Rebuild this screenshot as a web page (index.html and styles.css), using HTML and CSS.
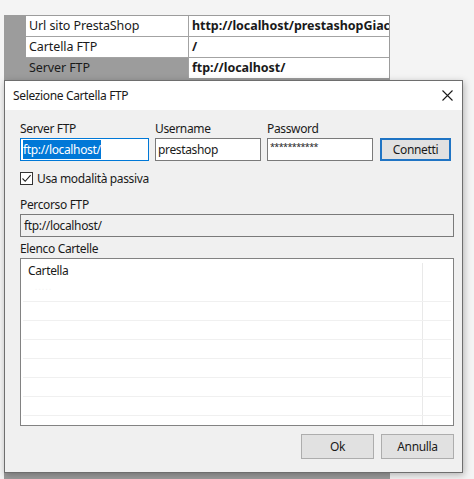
FILE: index.html
```html
<!DOCTYPE html>
<html lang="it">
<head>
<meta charset="utf-8">
<title>Selezione Cartella FTP</title>
<link rel="stylesheet" href="styles.css">
</head>
<body>
<div class="app">
  <div class="grid-panel">
    <div class="props">
      <div class="cell label">Url sito PrestaShop</div>
      <div class="cell value">http://localhost/prestashopGiac</div>
      <div class="cell label">Cartella FTP</div>
      <div class="cell value">/</div>
      <div class="cell label selected">Server FTP</div>
      <div class="cell value">ftp://localhost/</div>
    </div>
  </div>
</div>

<div class="dialog">
  <div class="titlebar">
    <span class="title">Selezione Cartella FTP</span>
    <svg class="close" width="11" height="11" viewBox="0 0 11 11"><path d="M0.5 0.5 L10.5 10.5 M10.5 0.5 L0.5 10.5" stroke="#1a1a1a" stroke-width="1.1" fill="none"/></svg>
  </div>
  <div class="body">
    <div class="fields">
      <div class="lbl">Server FTP</div>
      <div class="lbl">Username</div>
      <div class="lbl">Password</div>
      <div></div>
      <div class="input focused"><span class="sel">ftp://localhost/</span></div>
      <div class="input">prestashop</div>
      <div class="input pwd">***********</div>
      <div class="btn default">Connetti</div>
    </div>
    <div class="check-row">
      <span class="checkbox"><svg width="11" height="11" viewBox="0 0 11 11"><path d="M1.5 5.5 L4.2 8.3 L9.6 2.2" stroke="#1f1f1f" stroke-width="1.1" fill="none"/></svg></span>
      <span>Usa modalità passiva</span>
    </div>
    <div class="lbl sec1">Percorso FTP</div>
    <div class="input readonly">ftp://localhost/</div>
    <div class="lbl sec2">Elenco Cartelle</div>
    <div class="list">
      <div class="list-head">Cartella</div>
      <div class="list-row"><span class="ghost">. . . . .</span></div>
      <div class="list-row"></div>
      <div class="list-row"></div>
      <div class="list-row"></div>
      <div class="list-row"></div>
      <div class="list-row"></div>
      <div class="list-row"></div>
    </div>
    <div class="actions">
      <div class="btn">Ok</div>
      <div class="btn">Annulla</div>
    </div>
  </div>
</div>
</body>
</html>
```

FILE: styles.css
```css
html, body {
  margin: 0;
  padding: 0;
}
body {
  width: 474px;
  height: 479px;
  overflow: hidden;
  background: #f4f4f4;
  font-family: "Noto Sans", "Open Sans", sans-serif;
  font-size: 12px;
  letter-spacing: -0.35px;
  color: #1a1a1a;
  position: relative;
}
.app {
  padding-top: 15px;
  padding-left: 4px;
  height: 464px;
}
.grid-panel {
  width: 386px;
  height: 100%;
  background: #9c9c9c;
  padding: 1px 1px 0 22px;
  box-sizing: border-box;
}
.props {
  display: grid;
  grid-template-columns: 162px 200px;
  grid-auto-rows: 20px;
  gap: 1px;
  background: #a3a3a3;
  font-size: 12.5px;
  letter-spacing: -0.1px;
}
.cell {
  background: #fff;
  padding-left: 3px;
  line-height: 20px;
  white-space: nowrap;
  overflow: hidden;
}
.cell.selected {
  background: #9c9c9c;
}
.cell.value {
  font-weight: bold;
  padding-left: 3px;
  letter-spacing: -0.05px;
}

.dialog {
  position: absolute;
  left: 4px;
  top: 80px;
  width: 459px;
  height: 393px;
  box-sizing: border-box;
  border: 1px solid #6e6e6e;
  background: #f0f0f0;
  box-shadow: 1px 2px 7px rgba(0, 0, 0, 0.28);
  display: flex;
  flex-direction: column;
}
.titlebar {
  height: 29px;
  background: #fff;
  display: flex;
  align-items: center;
  justify-content: space-between;
  padding-left: 8px;
  padding-right: 9px;
}
.close {
  display: block;
}
.body {
  flex: 1;
  padding: 11px 8px 12px 15px;
  display: flex;
  flex-direction: column;
}
.lbl {
  height: 16px;
  line-height: 16px;
  white-space: nowrap;
}
.fields {
  display: grid;
  grid-template-columns: 129px 106px 106px 72px;
  grid-template-rows: 16px 23px;
  column-gap: 6px;
  row-gap: 1px;
}
.fields .btn {
  margin-left: 1px;
}
.input {
  height: 23px;
  box-sizing: border-box;
  border: 1px solid #7a7a7a;
  background: #fff;
  padding-left: 2px;
  line-height: 21px;
  white-space: nowrap;
  overflow: hidden;
}
.input.focused {
  border-color: #0078d7;
}
.sel {
  background: #0078d7;
  color: #fff;
  padding: 1px 0;
}
.pwd {
  font-size: 9px;
  line-height: 16px;
  letter-spacing: -0.6px;
}
.btn {
  height: 23px;
  box-sizing: border-box;
  border: 1px solid #adadad;
  background: #e1e1e1;
  display: flex;
  align-items: center;
  justify-content: center;
}
.btn.default {
  border: 2px solid #1f74c4;
}
.check-row {
  margin-top: 11px;
  height: 13px;
  display: flex;
  align-items: center;
  gap: 4px;
  line-height: 13px;
}
.checkbox {
  width: 13px;
  height: 13px;
  box-sizing: border-box;
  border: 1px solid #333;
  background: #fff;
  display: flex;
  align-items: center;
  justify-content: center;
}
.checkbox svg {
  display: block;
}
.sec1 {
  margin-top: 12px;
}
.input.readonly {
  margin-top: 1px;
  background: #f0f0f0;
  padding-left: 3px;
}
.sec2 {
  margin-top: 4px;
}
.list {
  margin-top: 1px;
  height: 168px;
  box-sizing: border-box;
  border: 1px solid #828282;
  background: linear-gradient(#e9e9e9, #e9e9e9) no-repeat 401px 4px / 1px 162px, #fff;
  overflow: hidden;
}
.list-head {
  height: 24px;
  line-height: 24px;
  padding-left: 7px;
}
.list-row {
  height: 18px;
  margin: 0 2px;
  border-bottom: 1px solid #f0f0f0;
}
.ghost {
  color: #f4f4f4;
  font-size: 8px;
  padding-left: 12px;
  line-height: 8px;
  display: block;
}
.actions {
  margin-top: 8px;
  display: flex;
  justify-content: flex-end;
  gap: 7px;
}
.actions .btn {
  width: 73px;
  height: 25px;
}
```
